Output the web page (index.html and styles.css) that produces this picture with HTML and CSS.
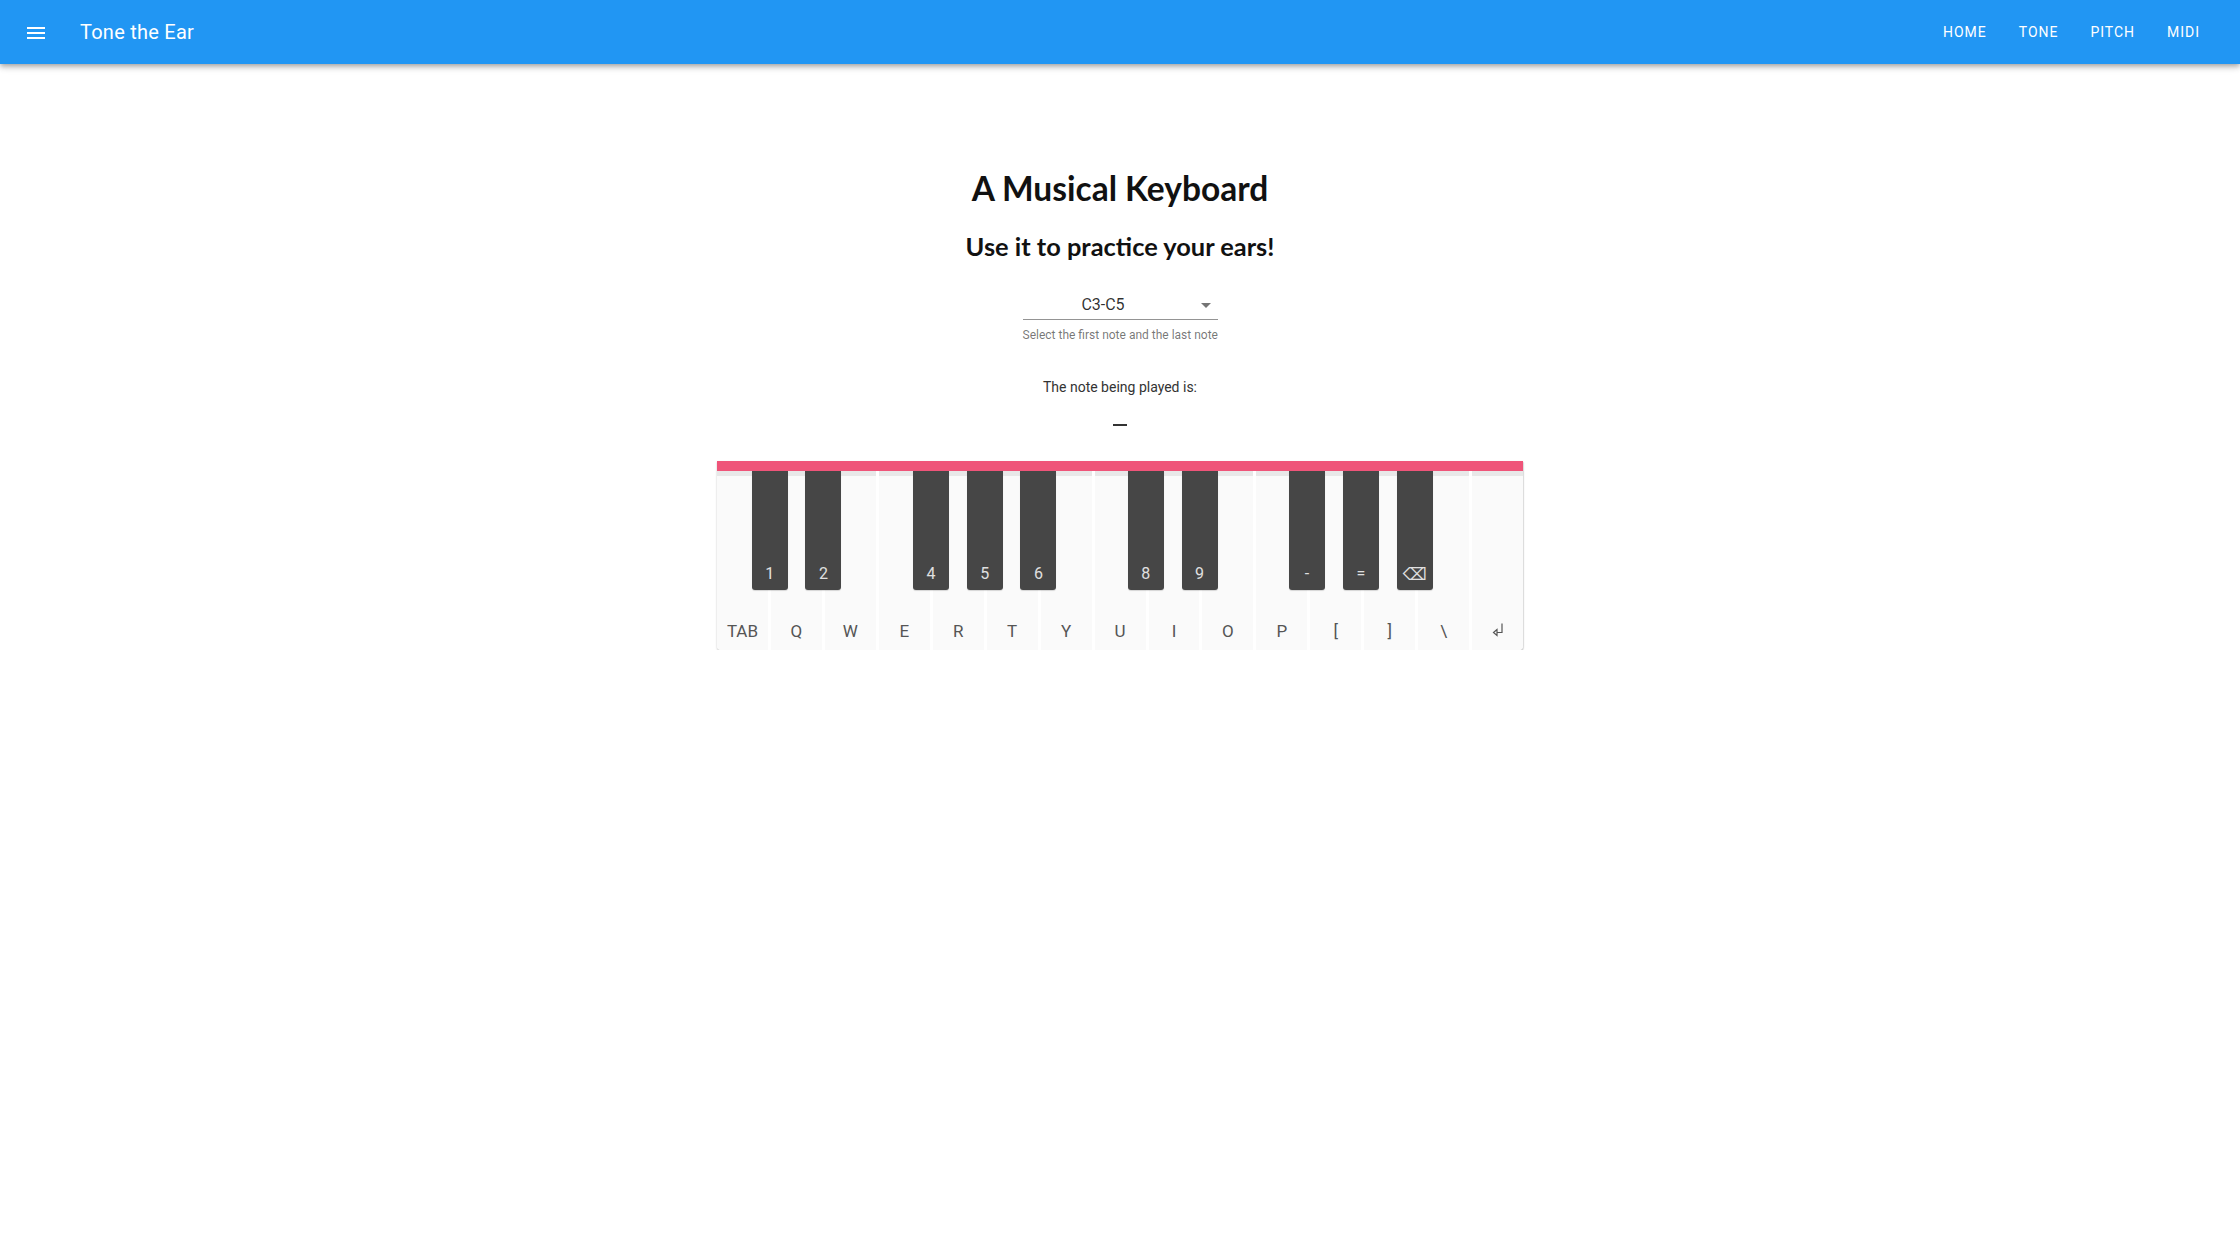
FILE: index.html
```html
<!DOCTYPE html>
<html lang="en">
<head>
<meta charset="utf-8">
<title>Tone the Ear</title>
<link rel="stylesheet" href="styles.css">
</head>
<body>
<header class="app-bar">
  <div class="bar-left">
    <svg class="nav-icon" viewBox="0 0 24 24" width="24" height="24"><path d="M3,6H21V8H3V6M3,11H21V13H3V11M3,16H21V18H3V16Z" fill="#fff"/></svg>
    <span class="bar-title">Tone the Ear</span>
  </div>
  <nav class="bar-nav">
    <a class="nav-btn">Home</a>
    <a class="nav-btn">Tone</a>
    <a class="nav-btn">Pitch</a>
    <a class="nav-btn">Midi</a>
  </nav>
</header>
<main class="content">
  <h1 class="title">A Musical Keyboard</h1>
  <h2 class="subtitle">Use it to practice your ears!</h2>
  <div class="select">
    <div class="select-field">
      <span class="select-value">C3-C5</span>
      <svg class="select-arrow" viewBox="0 0 24 24" width="24" height="24"><path d="M7,10L12,15L17,10H7Z" fill="rgba(0,0,0,0.54)"/></svg>
    </div>
    <div class="select-hint">Select the first note and the last note</div>
  </div>
  <p class="note-label">The note being played is:</p>
  <div class="note-dash"></div>
  <div class="piano">
    <div class="white-key"><span>TAB</span></div>
    <div class="white-key"><span>Q</span></div>
    <div class="white-key"><span>W</span></div>
    <div class="white-key"><span>E</span></div>
    <div class="white-key"><span>R</span></div>
    <div class="white-key"><span>T</span></div>
    <div class="white-key"><span>Y</span></div>
    <div class="white-key"><span>U</span></div>
    <div class="white-key"><span>I</span></div>
    <div class="white-key"><span>O</span></div>
    <div class="white-key"><span>P</span></div>
    <div class="white-key"><span>[</span></div>
    <div class="white-key"><span>]</span></div>
    <div class="white-key"><span>\</span></div>
    <div class="white-key"><svg class="enter-icon" viewBox="0 0 12 15" width="12" height="15"><path d="M10,1.5V10.5H5M5,7.5L1.5,10.5L5,13.5Z" fill="none" stroke="#555" stroke-width="1.2" stroke-linejoin="miter"/></svg></div>
    <div class="black-key" style="left: calc(100% * 1 / 15 - 19px)"><span>1</span></div>
    <div class="black-key" style="left: calc(100% * 2 / 15 - 19px)"><span>2</span></div>
    <div class="black-key" style="left: calc(100% * 4 / 15 - 19px)"><span>4</span></div>
    <div class="black-key" style="left: calc(100% * 5 / 15 - 19px)"><span>5</span></div>
    <div class="black-key" style="left: calc(100% * 6 / 15 - 19px)"><span>6</span></div>
    <div class="black-key" style="left: calc(100% * 8 / 15 - 19px)"><span>8</span></div>
    <div class="black-key" style="left: calc(100% * 9 / 15 - 19px)"><span>9</span></div>
    <div class="black-key" style="left: calc(100% * 11 / 15 - 19px)"><span>-</span></div>
    <div class="black-key" style="left: calc(100% * 12 / 15 - 19px)"><span>=</span></div>
    <div class="black-key" style="left: calc(100% * 13 / 15 - 19px)"><span class="sym">⌫</span></div>
  </div>
</main>
</body>
</html>
```

FILE: styles.css
```css
html, body {
  margin: 0;
  padding: 0;
  background: #ffffff;
}

body {
  font-family: Roboto, "Liberation Sans", Arial, sans-serif;
  color: rgba(0, 0, 0, 0.87);
}

.app-bar {
  height: 64px;
  background: #2196f3;
  display: flex;
  align-items: center;
  justify-content: space-between;
  padding: 0 24px;
  box-shadow: 0 2px 4px -1px rgba(0,0,0,.2), 0 4px 5px 0 rgba(0,0,0,.14), 0 1px 10px 0 rgba(0,0,0,.12);
  position: relative;
  z-index: 2;
}

.bar-left {
  display: flex;
  align-items: center;
}

.nav-icon {
  display: block;
  margin-top: 1px;
}

.bar-title {
  color: #fff;
  font-size: 20px;
  font-weight: 400;
  letter-spacing: 0.0125em;
  margin-left: 32px;
  line-height: 28px;
}

.bar-nav {
  display: flex;
  align-items: center;
}

.nav-btn {
  color: #fff;
  font-size: 14px;
  font-weight: 400;
  letter-spacing: 0.07em;
  text-transform: uppercase;
  padding: 0 16px;
  min-width: 64px;
  box-sizing: border-box;
  text-align: center;
  line-height: 36px;
  cursor: pointer;
}

.content {
  text-align: center;
  padding-top: 104px;
}

.title {
  font-family: Lato, "Noto Sans", sans-serif;
  font-weight: 700;
  font-size: 33.5px;
  line-height: 40px;
  margin: 0;
  color: #111;
}

.subtitle {
  font-family: Lato, "Noto Sans", sans-serif;
  font-weight: 700;
  font-size: 25.4px;
  line-height: 32px;
  margin: 22px 0 0;
  color: #111;
}

.select {
  width: 195px;
  margin: 28px auto 0;
}

.select-field {
  height: 29px;
  display: flex;
  align-items: center;
  border-bottom: 1px solid rgba(0, 0, 0, 0.42);
}

.select-value {
  flex: 1;
  font-size: 16px;
  line-height: 24px;
  text-align: center;
  padding-right: 10px;
  color: rgba(0, 0, 0, 0.82);
}

.select-arrow {
  display: block;
  flex: none;
}

.select-hint {
  font-size: 12px;
  line-height: 14px;
  margin-top: 8px;
  color: rgba(0, 0, 0, 0.55);
  white-space: nowrap;
}

.note-label {
  font-size: 14px;
  line-height: 20px;
  margin: 35px 0 0;
  color: #333;
}

.note-dash {
  width: 14px;
  height: 2px;
  background: #333;
  margin: 27px auto 0;
}

.piano {
  position: relative;
  width: 806px;
  margin: 35px auto 0;
  border-top: 10px solid #ef5479;
  display: flex;
  gap: 3px;
  background: #ffffff;
  border-radius: 0 0 4px 4px;
  box-shadow: 0 1px 2px rgba(0,0,0,.25), 1px 1px 1px rgba(0,0,0,.08);
}

.white-key {
  flex: 1;
  height: 179px;
  background: linear-gradient(#e8e8e8 0, #e8e8e8 5px, #fafafa 5px);
  display: flex;
  flex-direction: column;
  justify-content: flex-end;
  align-items: center;
  padding-bottom: 9px;
  box-sizing: border-box;
  font-size: 17px;
  line-height: 20px;
  color: #555;
}

.white-key:first-child {
  border-bottom-left-radius: 4px;
}

.white-key:nth-child(15) {
  border-bottom-right-radius: 4px;
}

.enter-icon {
  display: block;
  margin-bottom: 4px;
}

.sym {
  font-family: "DejaVu Sans", sans-serif;
  font-size: 17px;
}

.black-key {
  position: absolute;
  top: 0;
  width: 36px;
  height: 119px;
  background: #464646;
  border-radius: 0 0 3px 3px;
  box-shadow: 0 1px 1px rgba(0,0,0,.15);
  display: flex;
  flex-direction: column;
  justify-content: flex-end;
  align-items: center;
  padding-bottom: 6px;
  box-sizing: border-box;
  font-size: 16px;
  line-height: 20px;
  color: #e0e0e0;
}
```
